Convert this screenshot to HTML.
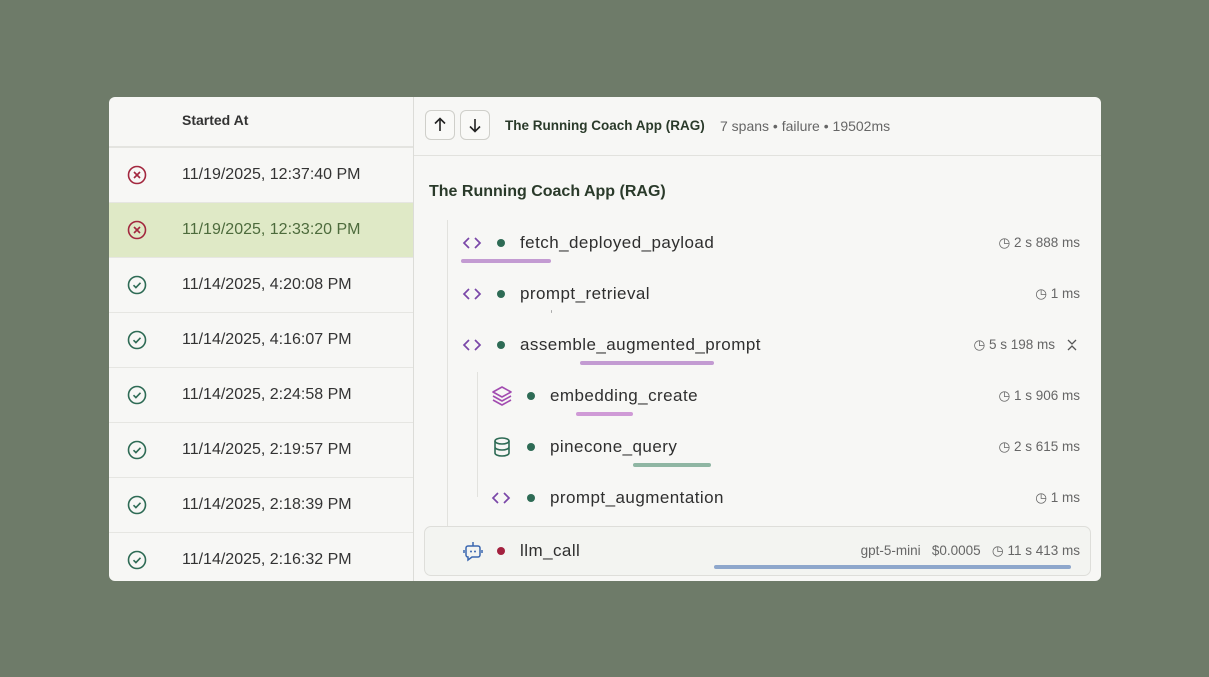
<!DOCTYPE html><html><head><style>
body{margin:0;width:1209px;height:677px;background:#6e7b69;font-family:"Liberation Sans",sans-serif;position:relative;overflow:hidden}
.panel{position:absolute;left:109px;top:97px;width:992px;height:484px;background:#f7f7f5;border-radius:6px;overflow:hidden}
.left{position:absolute;left:0;top:0;width:304px;height:484px;border-right:1px solid #dcdcd8}
.lh{height:49px;border-bottom:2px solid #e4e4e0;font-weight:bold;font-size:14px;color:#333;position:relative}
.lh span{position:absolute;left:73px;top:15px}
.row{height:54px;border-bottom:1px solid #e6e6e2;position:relative;font-size:16px;color:#333}
.row.sel{background:#dfe9c6;color:#4d6b3c}
.row .t{position:absolute;left:73px;top:18px}
.row svg{position:absolute;left:17px;top:16px}
.abs{position:absolute}
.btn{position:absolute;top:13px;width:28px;height:28px;border:1px solid #cfcfca;border-radius:6px;background:#f9f9f7}
.name{position:absolute;font-size:17px;letter-spacing:0.45px;color:#2f2f2f}
.dot{position:absolute;width:8px;height:8px;border-radius:50%;background:#2e6b55}
.dur{position:absolute;font-size:13.5px;color:#666;text-align:right;right:21px}
.bar{position:absolute;height:4px;border-radius:2px}
</style></head><body>
<div class="panel">
<div class="left">
<div class="lh"><span>Started At</span></div>
<div class="row"><svg width="22" height="22" viewBox="0 0 22 22"><circle cx="11" cy="11" r="8.5" fill="none" stroke="#a3283f" stroke-width="1.6"/><path d="M8 8l6 6M14 8l-6 6" stroke="#a3283f" stroke-width="1.6"/></svg><span class="t">11/19/2025, 12:37:40 PM</span></div>
<div class="row sel"><svg width="22" height="22" viewBox="0 0 22 22"><circle cx="11" cy="11" r="8.5" fill="none" stroke="#a3283f" stroke-width="1.6"/><path d="M8 8l6 6M14 8l-6 6" stroke="#a3283f" stroke-width="1.6"/></svg><span class="t">11/19/2025, 12:33:20 PM</span></div>
<div class="row"><svg width="22" height="22" viewBox="0 0 22 22"><circle cx="11" cy="11" r="8.5" fill="none" stroke="#2e6b55" stroke-width="1.6"/><path d="M7.5 11.2l2.4 2.4 4.6-4.8" fill="none" stroke="#2e6b55" stroke-width="1.6"/></svg><span class="t">11/14/2025, 4:20:08 PM</span></div>
<div class="row"><svg width="22" height="22" viewBox="0 0 22 22"><circle cx="11" cy="11" r="8.5" fill="none" stroke="#2e6b55" stroke-width="1.6"/><path d="M7.5 11.2l2.4 2.4 4.6-4.8" fill="none" stroke="#2e6b55" stroke-width="1.6"/></svg><span class="t">11/14/2025, 4:16:07 PM</span></div>
<div class="row"><svg width="22" height="22" viewBox="0 0 22 22"><circle cx="11" cy="11" r="8.5" fill="none" stroke="#2e6b55" stroke-width="1.6"/><path d="M7.5 11.2l2.4 2.4 4.6-4.8" fill="none" stroke="#2e6b55" stroke-width="1.6"/></svg><span class="t">11/14/2025, 2:24:58 PM</span></div>
<div class="row"><svg width="22" height="22" viewBox="0 0 22 22"><circle cx="11" cy="11" r="8.5" fill="none" stroke="#2e6b55" stroke-width="1.6"/><path d="M7.5 11.2l2.4 2.4 4.6-4.8" fill="none" stroke="#2e6b55" stroke-width="1.6"/></svg><span class="t">11/14/2025, 2:19:57 PM</span></div>
<div class="row"><svg width="22" height="22" viewBox="0 0 22 22"><circle cx="11" cy="11" r="8.5" fill="none" stroke="#2e6b55" stroke-width="1.6"/><path d="M7.5 11.2l2.4 2.4 4.6-4.8" fill="none" stroke="#2e6b55" stroke-width="1.6"/></svg><span class="t">11/14/2025, 2:18:39 PM</span></div>
<div class="row"><svg width="22" height="22" viewBox="0 0 22 22"><circle cx="11" cy="11" r="8.5" fill="none" stroke="#2e6b55" stroke-width="1.6"/><path d="M7.5 11.2l2.4 2.4 4.6-4.8" fill="none" stroke="#2e6b55" stroke-width="1.6"/></svg><span class="t">11/14/2025, 2:16:32 PM</span></div>
</div>
<!-- right -->
<div class="abs" style="left:305px;top:0;width:687px;height:58px;border-bottom:1px solid #e2e2de"></div>
<div class="btn" style="left:316px"><svg width="28" height="28"><path d="M14 20V8M9 12.5l5-5 5 5" fill="none" stroke="#222" stroke-width="1.6"/></svg></div>
<div class="btn" style="left:351px"><svg width="28" height="28"><path d="M14 8v12M9 15.5l5 5 5-5" fill="none" stroke="#222" stroke-width="1.6"/></svg></div>
<div class="abs" style="left:396px;top:21px;font-size:13.5px;font-weight:bold;color:#2a3a2a">The Running Coach App (RAG)</div>
<div class="abs" style="left:611px;top:21px;font-size:14px;color:#666">7 spans • failure • 19502ms</div>
<div class="abs" style="left:320px;top:86px;font-size:16px;font-weight:bold;color:#2a3a2a">The Running Coach App (RAG)</div>
<div class="abs" style="left:338px;top:123px;width:1px;height:350px;background:#e2e2de"></div>
<div class="abs" style="left:368px;top:275px;width:1px;height:125px;background:#e2e2de"></div>
<div class="abs" style="left:315px;top:429px;width:665px;height:48px;border:1px solid #dededa;border-radius:7px;background:#f3f4f1"></div>

<svg class="abs" style="left:352px;top:137px" width="22" height="18"><path d="M8 4l-5 5 5 5M14 4l5 5-5 5" fill="none" stroke="#7a47a8" stroke-width="1.7"/></svg>
<svg class="abs" style="left:352px;top:188px" width="22" height="18"><path d="M8 4l-5 5 5 5M14 4l5 5-5 5" fill="none" stroke="#7a47a8" stroke-width="1.7"/></svg>
<svg class="abs" style="left:352px;top:239px" width="22" height="18"><path d="M8 4l-5 5 5 5M14 4l5 5-5 5" fill="none" stroke="#7a47a8" stroke-width="1.7"/></svg>
<svg class="abs" style="left:381px;top:392px" width="22" height="18"><path d="M8 4l-5 5 5 5M14 4l5 5-5 5" fill="none" stroke="#7a47a8" stroke-width="1.7"/></svg>
<svg class="abs" style="left:382px;top:288px" width="22" height="22" viewBox="0 0 22 22"><path d="M11 2l9 5-9 5-9-5z M2 11l9 5 9-5 M2 15l9 5 9-5" fill="none" stroke="#a24bb0" stroke-width="1.6" stroke-linejoin="round"/></svg>
<svg class="abs" style="left:383px;top:339px" width="20" height="22" viewBox="0 0 20 22"><ellipse cx="10" cy="5" rx="7" ry="3" fill="none" stroke="#2e6b55" stroke-width="1.6"/><path d="M3 5v12c0 1.7 3 3 7 3s7-1.3 7-3V5M3 11c0 1.7 3 3 7 3s7-1.3 7-3" fill="none" stroke="#2e6b55" stroke-width="1.6"/></svg>
<svg class="abs" style="left:353px;top:443px" width="22" height="22" viewBox="0 0 22 22"><path d="M11 2v4M6 6h10a2 2 0 012 2v7a2 2 0 01-2 2h-6l-4 3v-3a2 2 0 01-2-2V8a2 2 0 012-2zM2 10v3M20 10v3" fill="none" stroke="#3a66b0" stroke-width="1.5"/><circle cx="9" cy="11.5" r="1" fill="#3a66b0"/><circle cx="13" cy="11.5" r="1" fill="#3a66b0"/></svg>

<div class="dot" style="left:388px;top:142px"></div><div class="name" style="left:411px;top:136px">fetch_deployed_payload</div>
<div class="dot" style="left:388px;top:193px"></div><div class="name" style="left:411px;top:187px">prompt_retrieval</div>
<div class="dot" style="left:388px;top:244px"></div><div class="name" style="left:411px;top:238px">assemble_augmented_prompt</div>
<div class="dot" style="left:418px;top:295px"></div><div class="name" style="left:441px;top:289px">embedding_create</div>
<div class="dot" style="left:418px;top:346px"></div><div class="name" style="left:441px;top:340px">pinecone_query</div>
<div class="dot" style="left:418px;top:397px"></div><div class="name" style="left:441px;top:391px">prompt_augmentation</div>
<div class="dot" style="left:388px;top:450px;background:#a3213f"></div><div class="name" style="left:411px;top:444px">llm_call</div>

<div class="bar" style="left:352px;top:162px;width:90px;background:#c39bd2"></div>
<div class="bar" style="left:442px;top:213px;width:1px;height:3px;background:#aaa"></div>
<div class="bar" style="left:471px;top:264px;width:134px;background:#c39bd2"></div>
<div class="bar" style="left:467px;top:315px;width:57px;background:#cf9ad6"></div>
<div class="bar" style="left:524px;top:366px;width:78px;background:#8fb6a3"></div>
<div class="bar" style="left:605px;top:468px;width:357px;background:#8ea7cc"></div>

<div class="dur" style="top:138px">◷ 2 s 888 ms</div>
<div class="dur" style="top:189px">◷ 1 ms</div>
<div class="dur" style="top:240px;right:46px">◷ 5 s 198 ms</div>
<svg class="abs" style="left:957px;top:241px" width="12" height="14"><path d="M2 2l4 4 4-4M2 12l4-4 4 4" fill="none" stroke="#555" stroke-width="1.3"/></svg>
<div class="dur" style="top:291px">◷ 1 s 906 ms</div>
<div class="dur" style="top:342px">◷ 2 s 615 ms</div>
<div class="dur" style="top:393px">◷ 1 ms</div>
<div class="dur" style="top:446px">gpt-5-mini&nbsp;&nbsp; $0.0005&nbsp;&nbsp; ◷ 11 s 413 ms</div>
</div>
</body></html>
